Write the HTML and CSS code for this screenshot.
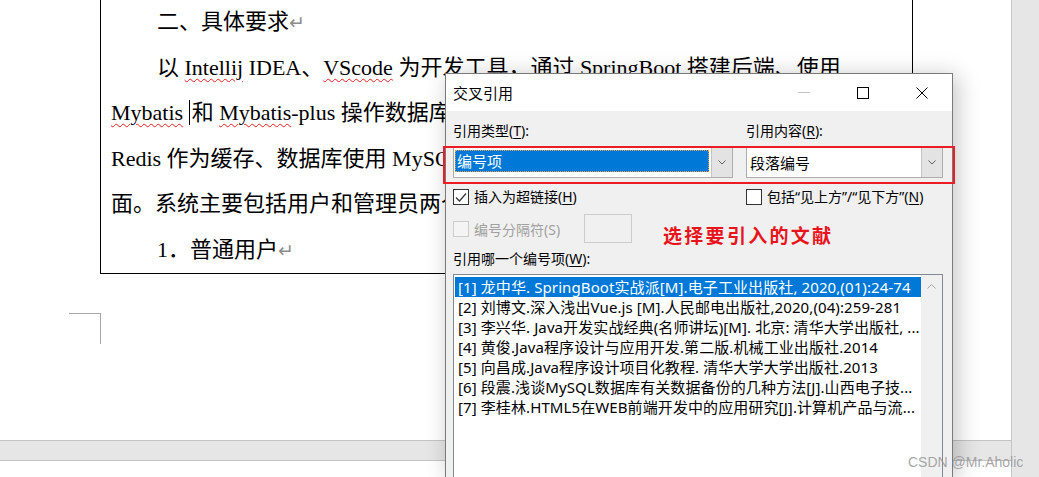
FILE: index.html
```html
<!DOCTYPE html>
<html lang="zh-CN">
<head>
<meta charset="utf-8">
<title>交叉引用</title>
<link rel="stylesheet" href="styles.css">
</head>
<body>
<div class="app">
  <main class="doc">
    <div class="page">
      <p class="line indent">二、具体要求<span class="ret">↵</span></p>
      <p class="line indent">以 <span class="sq">Intellij</span> IDEA、<span class="sq">VScode</span> 为开发工具，通过 SpringBoot 搭建后端、使用</p>
      <p class="line"><span class="sq">Mybatis</span> <span class="caret"></span>和 <span class="sq">Mybatis</span>-plus 操作数据库，使用 Vue 搭建前端页面，使用</p>
      <p class="line">Redis 作为缓存、数据库使用 MySQL，实现前后端分离的系统页</p>
      <p class="line">面。系统主要包括用户和管理员两个角色。</p>
      <p class="line indent">1．普通用户<span class="ret">↵</span></p>
    </div>
    <div class="crop"></div>
  </main>
  <aside class="rail"></aside>
  <div class="hbar"></div>
</div>

<section class="dialog">
  <header class="titlebar">
    <span class="title">交叉引用</span>
    <div class="controls">
      <span class="ctl"><svg width="12" height="12" viewBox="0 0 12 12"><path d="M0 5.5h12" stroke="#c4c4c4" fill="none"/></svg></span>
      <span class="ctl"><svg width="12" height="12" viewBox="0 0 12 12"><rect x="0.5" y="0.5" width="11" height="11" fill="none" stroke="#000"/></svg></span>
      <span class="ctl close"><svg width="12" height="12" viewBox="0 0 12 12"><path d="M0.5 0.5l11 11M11.5 0.5l-11 11" stroke="#000" fill="none"/></svg></span>
    </div>
  </header>
  <div class="body">
    <div class="top">
      <div class="lbl">引用类型(<u>T</u>):</div>
      <div class="lbl">引用内容(<u>R</u>):</div>
      <div class="combo">
        <div class="value"><span class="sel">编号项</span></div>
        <span class="btn"><svg width="8" height="5" viewBox="0 0 8 5"><path d="M0.5 0.5L4 4L7.5 0.5" stroke="#606060" fill="none"/></svg></span>
      </div>
      <div class="combo">
        <div class="value"><span class="plain">段落编号</span></div>
        <span class="btn"><svg width="8" height="5" viewBox="0 0 8 5"><path d="M0.5 0.5L4 4L7.5 0.5" stroke="#606060" fill="none"/></svg></span>
      </div>
      <div class="check"><span class="box"><svg width="14" height="14" viewBox="0 0 14 14"><path d="M2 7.5L5.5 11L12 3.5" stroke="#333" stroke-width="1.2" fill="none"/></svg></span><span class="ctext">插入为超链接(<u>H</u>)</span></div>
      <div class="check"><span class="box"></span><span class="ctext">包括“见上方”/“见下方”(<u>N</u>)</span></div>
    </div>
    <div class="seprow">
      <span class="box dis"></span>
      <span class="dis-text">编号分隔符(S)</span>
      <span class="sepfield"></span>
      <span class="note">选择要引入的文献</span>
    </div>
    <div class="lbl list-lbl">引用哪一个编号项(<u>W</u>):</div>
    <div class="listbox">
      <ul class="items">
        <li class="item selected">[1] 龙中华. SpringBoot实战派[M].电子工业出版社, 2020,(01):24-74</li>
        <li class="item">[2] 刘博文.深入浅出Vue.js [M].人民邮电出版社,2020,(04):259-281</li>
        <li class="item">[3] 李兴华. Java开发实战经典(名师讲坛)[M]. 北京: 清华大学出版社, ...</li>
        <li class="item">[4] 黄俊.Java程序设计与应用开发.第二版.机械工业出版社.2014</li>
        <li class="item">[5] 向昌成.Java程序设计项目化教程. 清华大学大学出版社.2013</li>
        <li class="item">[6] 段震.浅谈MySQL数据库有关数据备份的几种方法[J].山西电子技...</li>
        <li class="item">[7] 李桂林.HTML5在WEB前端开发中的应用研究[J].计算机产品与流...</li>
      </ul>
      <div class="vscroll"><svg width="9" height="6" viewBox="0 0 9 6"><path d="M0.5 5.5L4.5 1.5L8.5 5.5" stroke="#a6a6a6" fill="none"/></svg></div>
    </div>
  </div>
  <div class="highlight"></div>
</section>
<div class="watermark">CSDN @Mr.Aholic</div>
</body>
</html>
```

FILE: styles.css
```css
* { box-sizing: border-box; }
html, body { margin: 0; padding: 0; }
body {
  width: 1039px;
  height: 477px;
  overflow: hidden;
  position: relative;
  background: #fff;
}

.app {
  display: grid;
  grid-template-columns: 1011px 28px;
  grid-template-rows: 440px 21px 16px;
  height: 477px;
}
.doc {
  grid-column: 1;
  grid-row: 1;
  background: #fff;
  overflow: hidden;
}
.rail {
  grid-column: 2;
  grid-row: 1 / 4;
  background: #e6e6e6;
  border-left: 1px solid #c6c6c6;
}
.hbar {
  grid-column: 1;
  grid-row: 2;
  background: #e6e6e6;
  border-top: 1px solid #c4c4c4;
  border-bottom: 1px solid #c4c4c4;
}

/* document page */
.page {
  margin: -1px 0 0 100px;
  width: 813px;
  border: 1px solid #000;
  border-top: 0;
  padding-left: 10px;
  overflow: hidden;
  font-family: "Liberation Serif", "Noto Sans CJK SC", serif;
  font-size: 22px;
  color: #000;
}
.line {
  margin: 0;
  height: 45.6px;
  line-height: 45.6px;
  white-space: nowrap;
}
.indent { text-indent: 46px; }
.sq {
  text-decoration: underline wavy #e02020;
  text-decoration-thickness: 1px;
  text-underline-offset: 3px;
}
.caret {
  display: inline-block;
  width: 1px;
  height: 25px;
  background: #000;
  vertical-align: -5px;
  margin-right: 2px;
}
.ret {
  font-family: "DejaVu Sans", sans-serif;
  font-size: 19px;
  color: #8c8c8c;
  text-indent: 0;
}
.crop {
  margin: 39px 0 0 69px;
  width: 32px;
  height: 31px;
  border-top: 1px solid #a8a8a8;
  border-right: 1px solid #a8a8a8;
}

/* dialog */
.dialog {
  position: absolute;
  left: 445px;
  top: 73px;
  width: 508px;
  height: 404px;
  background: #f0f0f0;
  border: 1px solid #7a7a7a;
  border-bottom: 0;
  box-shadow: 4px 3px 22px rgba(0, 0, 0, 0.24);
  font-family: "Noto Sans", "Noto Sans CJK SC", sans-serif;
  font-size: 14px;
  color: #000;
}
.titlebar {
  height: 37px;
  background: #fff;
  display: flex;
  align-items: center;
}
.title {
  padding-left: 7px;
  font-size: 15px;
}
.controls {
  margin-left: auto;
  display: flex;
  height: 37px;
}
.ctl {
  width: 59px;
  height: 37px;
  display: flex;
  align-items: center;
  justify-content: center;
}
.ctl.close { width: 60px; }
.ctl svg { display: block; }

.body {
  padding: 10px 8px 0 7px;
}
.top {
  display: grid;
  grid-template-columns: 280px 197px;
  column-gap: 13px;
}
.lbl {
  height: 20px;
  line-height: 20px;
  white-space: nowrap;
}
u { text-underline-offset: 2px; }

.combo {
  margin-top: 6px;
  height: 31px;
  border: 1px solid #adadad;
  background: #fff;
  display: flex;
}
.combo .value {
  flex: 1;
  padding: 2px 2px 0 1px;
  min-width: 0;
}
.sel {
  display: block;
  height: 22px;
  line-height: 22px;
  background: #0078d7;
  color: #fff;
  padding-left: 2px;
  font-size: 15px;
  outline: 1px dotted #e8a050;
  outline-offset: -1px;
}
.plain {
  display: block;
  line-height: 26px;
  padding-left: 2px;
  font-size: 15px;
}
.combo .btn {
  width: 21px;
  background: #e3e3e3;
  border-left: 1px solid #c4c4c4;
  display: flex;
  align-items: center;
  justify-content: center;
}
.combo .btn svg { display: block; }

.check {
  margin-top: 9px;
  height: 20px;
  display: flex;
  align-items: center;
  gap: 5px;
  white-space: nowrap;
}
.ctext { line-height: 20px; }
.box {
  width: 16px;
  height: 16px;
  flex: none;
  border: 1px solid #333;
  background: #fff;
  display: flex;
  align-items: center;
  justify-content: center;
}
.box svg { display: block; }
.box.dis {
  border-color: #cccccc;
  background: #f4f4f4;
}

.seprow {
  margin-top: 7px;
  height: 29px;
  display: flex;
  align-items: center;
}
.dis-text {
  margin-left: 5px;
  width: 110px;
  color: #a0a0a0;
  white-space: nowrap;
}
.sepfield {
  width: 48px;
  height: 29px;
  border: 1px solid #cccccc;
  background: #f0f0f0;
}
.note {
  margin-left: 31px;
  margin-top: 13px;
  color: #e8141c;
  font-family: "Noto Sans CJK SC", sans-serif;
  font-weight: bold;
  font-size: 19px;
  letter-spacing: 2.3px;
  line-height: 24px;
  white-space: nowrap;
}

.list-lbl { margin-top: 6px; }
.listbox {
  margin-top: 5px;
  width: 490px;
  height: 203px;
  border: 1px solid #828790;
  border-bottom: 0;
  background: #fff;
  display: flex;
}
.items {
  flex: 1;
  min-width: 0;
  margin: 0;
  padding: 2px 0 0 1px;
  list-style: none;
}
.item {
  height: 20px;
  line-height: 20px;
  padding-left: 3px;
  font-size: 15px;
  letter-spacing: 0.1px;
  white-space: nowrap;
  overflow: hidden;
}
.item.selected {
  background: #0078d7;
  color: #fff;
}
.vscroll {
  width: 21px;
  background: #f0f0f0;
  display: flex;
  justify-content: center;
  padding-top: 8px;
}
.vscroll svg { display: block; }

.highlight {
  position: absolute;
  left: -3px;
  top: 72px;
  width: 512px;
  height: 38px;
  border: 2px solid #ec1c24;
  pointer-events: none;
}

.watermark {
  position: absolute;
  left: 908px;
  top: 454px;
  font-family: "Liberation Sans", sans-serif;
  font-size: 14px;
  line-height: 16px;
  color: rgba(150, 150, 150, 0.85);
  white-space: nowrap;
}
```
